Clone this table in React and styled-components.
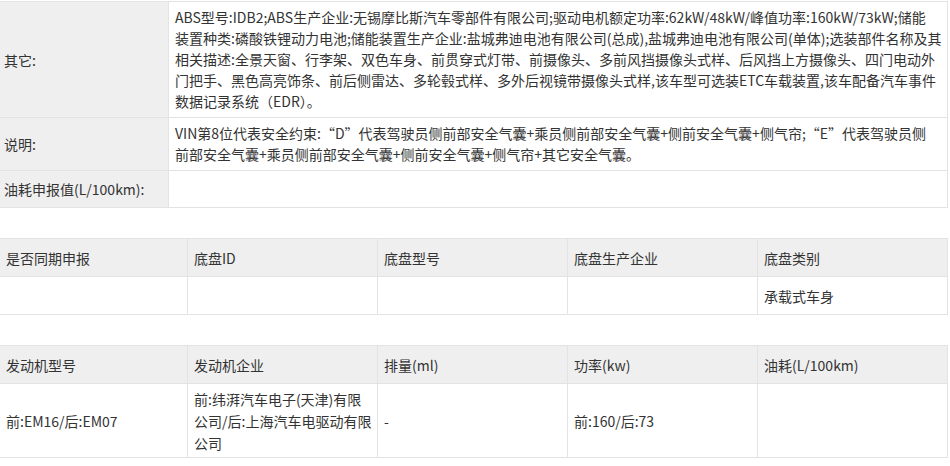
import React from "react";
import styled, { createGlobalStyle } from "styled-components";

const GlobalStyle = createGlobalStyle`
    body {
        margin: 0;
        background: #fff;
        color: #333;
        font-family: "Noto Sans CJK SC", "Noto Sans", sans-serif;
        font-size: 14px;
    }
`

const line = "#e3e3e3";

const Page = styled.div`
    width: 948px;
    padding-top: 1px;
    display: flex;
    flex-direction: column;
    gap: 30px;
`

// Top key/value table
const InfoTable = styled.div`
    display: grid;
    grid-template-columns: 169px 779px;
    border-top: 1px solid ${line};
`

const InfoLabel = styled.div`
    display: flex;
    align-items: center;
    padding: 0 4px;
    min-height: ${(p) => p.$h}px;
    background: #efefef;
    border-right: 1px solid ${line};
    border-bottom: 1px solid ${line};
`

const InfoValue = styled.div`
    padding: 5px 6px;
    line-height: 21px;
    border-right: 1px solid ${line};
    border-bottom: 1px solid ${line};
    white-space: nowrap;
`

// Column tables
const GridTable = styled.div`
    display: grid;
    grid-template-columns: 188px repeat(4, 190px);
    border-top: 1px solid ${line};
`

const Cell = styled.div`
    display: flex;
    align-items: center;
    padding: 0 6px;
    min-height: ${(p) => p.$h || 37}px;
    line-height: 22px;
    white-space: nowrap;
    background: ${(p) => (p.$head ? "#efefef" : "#fff")};
    border-right: 1px solid ${line};
    border-bottom: 1px solid ${line};
`

const info = [
    {
        label: "其它:",
        h: 115,
        lines: [
            "ABS型号:IDB2;ABS生产企业:无锡摩比斯汽车零部件有限公司;驱动电机额定功率:62kW/48kW/峰值功率:160kW/73kW;储能",
            "装置种类:磷酸铁锂动力电池;储能装置生产企业:盐城弗迪电池有限公司(总成),盐城弗迪电池有限公司(单体);选装部件名称及其",
            "相关描述:全景天窗、行李架、双色车身、前贯穿式灯带、前摄像头、多前风挡摄像头式样、后风挡上方摄像头、四门电动外",
            "门把手、黑色高亮饰条、前后侧雷达、多轮毂式样、多外后视镜带摄像头式样,该车型可选装ETC车载装置,该车配备汽车事件",
            "数据记录系统（EDR）。",
        ],
    },
    {
        label: "说明:",
        h: 52,
        lines: [
            "VIN第8位代表安全约束:“D”代表驾驶员侧前部安全气囊+乘员侧前部安全气囊+侧前安全气囊+侧气帘;“E”代表驾驶员侧",
            "前部安全气囊+乘员侧前部安全气囊+侧前安全气囊+侧气帘+其它安全气囊。",
        ],
    },
    { label: "油耗申报值(L/100km):", h: 36, lines: [] },
];

const chassis = {
    head: ["是否同期申报", "底盘ID", "底盘型号", "底盘生产企业", "底盘类别"],
    rows: [[[""], [""], [""], [""], ["承载式车身"]]],
    h: 37,
};

const engine = {
    head: ["发动机型号", "发动机企业", "排量(ml)", "功率(kw)", "油耗(L/100km)"],
    rows: [[
        ["前:EM16/后:EM07"],
        ["前:纬湃汽车电子(天津)有限", "公司/后:上海汽车电驱动有限", "公司"],
        ["-"],
        ["前:160/后:73"],
        [""],
    ]],
    h: 73,
};

const Lines = ({ lines }) =>
    lines.map((text, i) => (
        <React.Fragment key={i}>
            {i > 0 && <br />}
            {text}
        </React.Fragment>
    ));

const ColumnTable = ({ data }) => (
    <GridTable>
        {data.head.map((title) => (
            <Cell $head key={title}>{title}</Cell>
        ))}
        {data.rows.map((row, r) =>
            row.map((lines, c) => (
                <Cell $h={data.h} key={`${r}-${c}`}>
                    <div><Lines lines={lines} /></div>
                </Cell>
            ))
        )}
    </GridTable>
);

const App = () => {
    return (
        <>
            <GlobalStyle />
            <Page>
                <InfoTable>
                    {info.map((row) => (
                        <React.Fragment key={row.label}>
                            <InfoLabel $h={row.h}>{row.label}</InfoLabel>
                            <InfoValue>
                                <Lines lines={row.lines} />
                            </InfoValue>
                        </React.Fragment>
                    ))}
                </InfoTable>
                <ColumnTable data={chassis} />
                <ColumnTable data={engine} />
            </Page>
        </>
    );
};

export default App;
